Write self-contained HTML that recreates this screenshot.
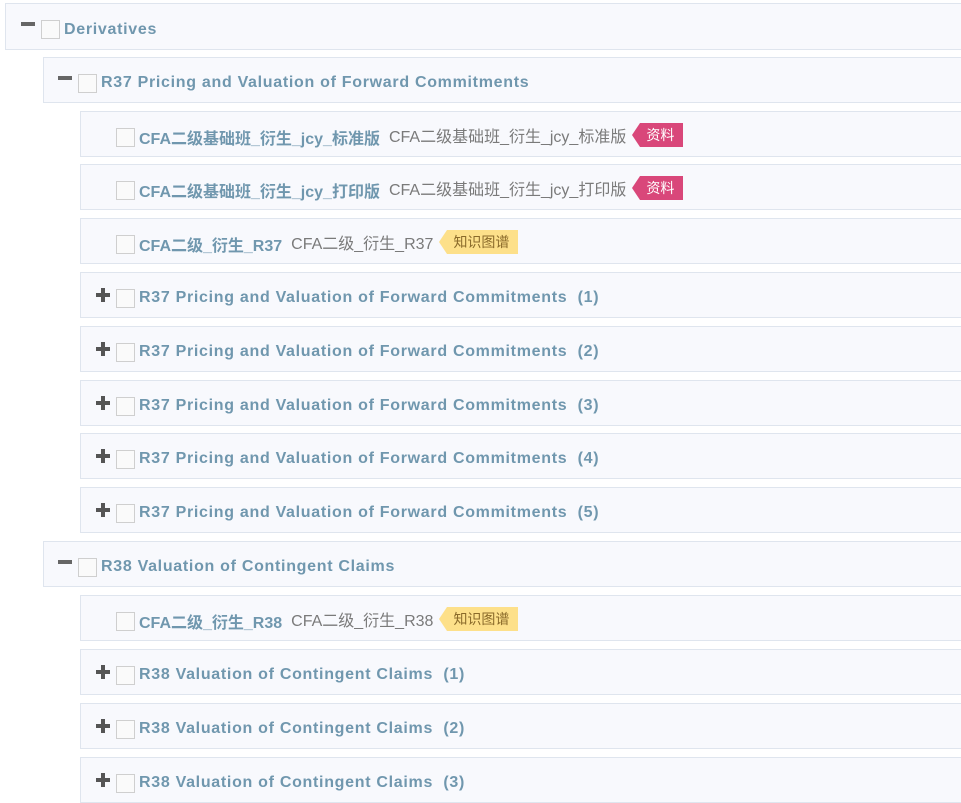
<!DOCTYPE html>
<html><head><meta charset="utf-8"><style>
body{margin:0;width:961px;height:791px;background:#fff;overflow:hidden;font-family:"Liberation Sans","Noto Sans CJK SC",sans-serif;position:relative}
.r{position:absolute;right:-2px;height:46px;background:#f8f9fd;border:1px solid #dfe5ee;box-sizing:border-box}
.r .in{position:absolute;top:0;bottom:0;display:flex;align-items:center}
.cb{width:19px;height:19px;border:1px solid #cfcfcf;background:#fafafa;box-sizing:border-box;margin-right:4px;flex:none;margin-top:6px}
.t{color:#7097ae;font-weight:bold;font-size:16px;letter-spacing:.7px;white-space:nowrap;position:relative;top:3px}
.t.c{letter-spacing:0}
.s{color:#7a7a7a;font-size:16px;margin-left:9px;white-space:nowrap;position:relative;top:1px}
.minus{width:14px;height:4px;background:#666;margin-right:6px;margin-top:-5px;flex:none}
.plus{width:14px;height:14px;position:relative;margin-right:6px;margin-top:0px;flex:none}
.plus:before{content:"";position:absolute;left:0;top:5px;width:14px;height:4px;background:#555}
.plus:after{content:"";position:absolute;left:5px;top:0;width:4px;height:14px;background:#555}
.tag{position:relative;margin-left:14px;height:24px;line-height:24px;padding:0 9px 0 6px;font-size:14px;white-space:nowrap;top:1px}
.tag:before{content:"";position:absolute;left:-8px;top:0;border-style:solid;border-width:12px 8px 12px 0}
.red{background:#d9477a;color:#fff}.red:before{border-color:transparent #d9477a transparent transparent}
.yel{background:#fde08a;color:#8a6a2a}.yel:before{border-color:transparent #fde08a transparent transparent}
</style></head><body>
<div class="r" style="left:5px;top:3px;height:47px"><div class="in" style="left:15px"><div class="minus"></div><div class="cb"></div><span class="t">Derivatives</span></div></div>
<div class="r" style="left:43px;top:57px"><div class="in" style="left:14px"><div class="minus"></div><div class="cb"></div><span class="t">R37 Pricing and Valuation of Forward Commitments</span></div></div>
<div class="r" style="left:80px;top:111px"><div class="in" style="left:35px"><div class="cb"></div><span class="t c">CFA二级基础班_衍生_jcy_标准版</span><span class="s">CFA二级基础班_衍生_jcy_标准版</span><span class="tag red">资料</span></div></div>
<div class="r" style="left:80px;top:164px"><div class="in" style="left:35px"><div class="cb"></div><span class="t c">CFA二级基础班_衍生_jcy_打印版</span><span class="s">CFA二级基础班_衍生_jcy_打印版</span><span class="tag red">资料</span></div></div>
<div class="r" style="left:80px;top:218px"><div class="in" style="left:35px"><div class="cb"></div><span class="t c">CFA二级_衍生_R37</span><span class="s">CFA二级_衍生_R37</span><span class="tag yel">知识图谱</span></div></div>
<div class="r" style="left:80px;top:272px"><div class="in" style="left:15px"><div class="plus"></div><div class="cb"></div><span class="t">R37 Pricing and Valuation of Forward Commitments&nbsp; (1)</span></div></div>
<div class="r" style="left:80px;top:326px"><div class="in" style="left:15px"><div class="plus"></div><div class="cb"></div><span class="t">R37 Pricing and Valuation of Forward Commitments&nbsp; (2)</span></div></div>
<div class="r" style="left:80px;top:380px"><div class="in" style="left:15px"><div class="plus"></div><div class="cb"></div><span class="t">R37 Pricing and Valuation of Forward Commitments&nbsp; (3)</span></div></div>
<div class="r" style="left:80px;top:433px"><div class="in" style="left:15px"><div class="plus"></div><div class="cb"></div><span class="t">R37 Pricing and Valuation of Forward Commitments&nbsp; (4)</span></div></div>
<div class="r" style="left:80px;top:487px"><div class="in" style="left:15px"><div class="plus"></div><div class="cb"></div><span class="t">R37 Pricing and Valuation of Forward Commitments&nbsp; (5)</span></div></div>
<div class="r" style="left:43px;top:541px"><div class="in" style="left:14px"><div class="minus"></div><div class="cb"></div><span class="t">R38 Valuation of Contingent Claims</span></div></div>
<div class="r" style="left:80px;top:595px"><div class="in" style="left:35px"><div class="cb"></div><span class="t c">CFA二级_衍生_R38</span><span class="s">CFA二级_衍生_R38</span><span class="tag yel">知识图谱</span></div></div>
<div class="r" style="left:80px;top:649px"><div class="in" style="left:15px"><div class="plus"></div><div class="cb"></div><span class="t">R38 Valuation of Contingent Claims&nbsp; (1)</span></div></div>
<div class="r" style="left:80px;top:703px"><div class="in" style="left:15px"><div class="plus"></div><div class="cb"></div><span class="t">R38 Valuation of Contingent Claims&nbsp; (2)</span></div></div>
<div class="r" style="left:80px;top:757px"><div class="in" style="left:15px"><div class="plus"></div><div class="cb"></div><span class="t">R38 Valuation of Contingent Claims&nbsp; (3)</span></div></div>
</body></html>
